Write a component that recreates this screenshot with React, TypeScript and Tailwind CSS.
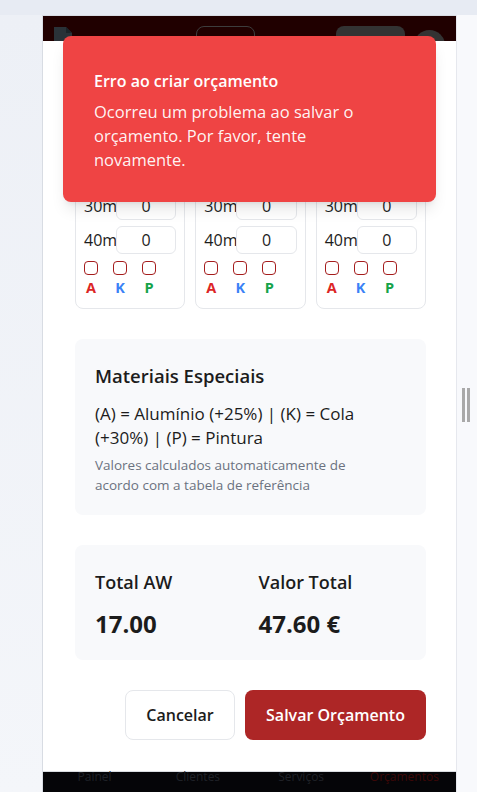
import React from 'react';

const rows = ['30m', '40m'];
const materials = [
  { key: 'A', color: 'text-[#dc2626]' },
  { key: 'K', color: 'text-[#3b82f6]' },
  { key: 'P', color: 'text-[#16a34a]' },
];
const sections = ['Tejadilho', 'Capô', 'Porta'];
const navItems = ['Painel', 'Clientes', 'Serviços', 'Orçamentos'];

// only the lower rows of each card show below the toast
function DentCard({ title }: { title: string }) {
  return (
    <div className="rounded-lg border border-[#e5e7eb] px-2 pt-2 pb-2.5" aria-label={title}>
      <div className="flex flex-col gap-[6px]">
        {rows.map((r) => (
          <div key={r} className="flex items-center">
            <span className="w-8 shrink-0 whitespace-nowrap text-base">{r}</span>
            <input
              readOnly
              value="0"
              className="h-7 w-full min-w-0 flex-1 rounded-md border border-[#e5e7eb] bg-white text-center text-base text-[#1c1c1c] outline-none"
            />
          </div>
        ))}
      </div>
      <div className="mt-[7px] flex gap-[15px]">
        {materials.map((m) => (
          <div key={m.key} className="flex w-[14px] flex-col items-center gap-[3px]">
            <span className="h-[14px] w-[14px] rounded-[4px] border-[1.5px] border-[#a51d1d] bg-white" />
            <span className={`text-[14.5px] font-bold leading-5 ${m.color}`}>{m.key}</span>
          </div>
        ))}
      </div>
    </div>
  );
}

export default function App() {
  return (
    <div className="flex h-[792px] w-[477px] flex-col overflow-hidden bg-[#e7ebf3] font-['Open_Sans',sans-serif] text-[#1c1c1c]">
      <div className="h-[15px] shrink-0" />
      <div className="flex min-h-0 flex-1">
        <div className="w-[42px] shrink-0 bg-gradient-to-b from-[#edf0f6] to-[#f4f6fa]" />

        <div className="relative flex w-[414px] shrink-0 flex-col border-l border-t border-[#d8dce3] bg-white">
          {/* header, dimmed behind the sheet */}
          <div className="flex h-[25px] shrink-0 items-start overflow-hidden bg-[#200000] pl-[10px] pt-[10px]">
            <svg width="20" height="22" viewBox="0 0 20 22" className="shrink-0">
              <path d="M1 1 H13 L19 7 V22 H1 Z" fill="#2a3238" />
              <path d="M13 1 V7 H19" fill="#1c2328" />
            </svg>
            <div className="ml-[123px] h-[30px] w-[59px] shrink-0 rounded-lg border border-[#3d3d3d]" />
            <div className="ml-[81px] h-[30px] w-[69px] shrink-0 rounded-lg bg-[#333333]" />
            <div className="ml-[9px] mt-[4px] h-[31px] w-[31px] shrink-0 rounded-full bg-[#333333]" />
          </div>

          {/* sheet */}
          <div className="flex min-h-0 flex-1 flex-col justify-end gap-[30px] overflow-hidden bg-white pb-[31px] pl-8 pr-[30px]">
            <div className="grid shrink-0 grid-cols-3 gap-2.5">
              {sections.map((s) => (
                <DentCard key={s} title={s} />
              ))}
            </div>

            <div className="shrink-0 rounded-lg bg-[#f8f9fb] px-5 pt-[23px] pb-5">
              <h3 className="text-[18.5px] font-semibold leading-7">Materiais Especiais</h3>
              <p className="mt-3 text-[17px] leading-6">
                (A) = Alumínio (+25%) | (K) = Cola (+30%) | (P) = Pintura
              </p>
              <p className="mt-[5px] max-w-[285px] text-[13.5px] leading-5 text-[#6b7280]">
                Valores calculados automaticamente de acordo com a tabela de referência
              </p>
            </div>

            <div className="grid shrink-0 grid-cols-2 gap-x-4 rounded-lg bg-[#f8f9fb] px-5 pt-[23px] pb-5">
              <div>
                <p className="text-[18px] font-semibold leading-7">Total AW</p>
                <p className="mt-3 text-2xl font-bold leading-8">17.00</p>
              </div>
              <div>
                <p className="text-[18px] font-semibold leading-7">Valor Total</p>
                <p className="mt-3 text-2xl font-bold leading-8">47.60 €</p>
              </div>
            </div>

            <div className="flex shrink-0 justify-end gap-2.5">
              <button className="h-[50px] w-[110px] rounded-lg border border-[#e5e7eb] bg-white text-base font-semibold text-[#1c1c1c]">
                Cancelar
              </button>
              <button className="h-[50px] w-[181px] rounded-lg bg-[#ad2626] text-base font-semibold text-white">
                Salvar Orçamento
              </button>
            </div>
          </div>

          {/* bottom nav, dimmed */}
          <div className="grid h-[21px] shrink-0 grid-cols-4 border-t border-[#d9dce1] bg-[#050508]">
            {navItems.map((n, i) => (
              <span
                key={n}
                className={`text-center text-xs leading-[9px] ${i === 3 ? 'text-[#3c0707]' : 'text-[#1f2127]'}`}
              >
                {n}
              </span>
            ))}
          </div>

          {/* toast */}
          <div className="absolute left-[20px] top-[20px] w-[373px] rounded-lg bg-[#ef4444] pl-[31px] pr-[50px] pt-[33px] pb-[30px] text-white shadow-lg">
            <p className="text-base font-semibold leading-6">Erro ao criar orçamento</p>
            <p className="mt-[7px] text-[16.5px] leading-6 text-white/95">
              Ocorreu um problema ao salvar o orçamento. Por favor, tente novamente.
            </p>
          </div>
        </div>

        <div className="flex w-[21px] shrink-0 items-center border-l border-[#e6e8ee] bg-[#f8f9fc] pt-[3px]">
          <div className="ml-[5px] flex gap-[2px]">
            <span className="h-[34px] w-[3px] bg-[#a9a9a9]" />
            <span className="h-[34px] w-[3px] bg-[#a9a9a9]" />
          </div>
        </div>
      </div>
    </div>
  );
}
